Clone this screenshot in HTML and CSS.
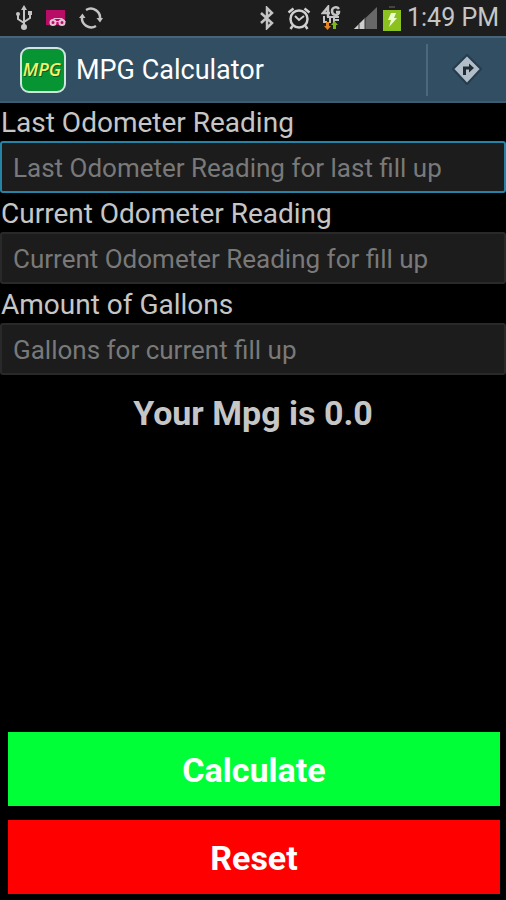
FILE: index.html
```html
<!DOCTYPE html>
<html lang="en">
<head>
<meta charset="utf-8">
<meta name="viewport" content="width=device-width, initial-scale=1">
<title>MPG Calculator</title>
<link rel="stylesheet" href="styles.css">
</head>
<body>
<div class="status">
  <div class="status-left">
    <svg width="18" height="26" viewBox="0 0 18 26" fill="none" stroke="#c4c4c4" stroke-width="2" aria-hidden="true">
      <path d="M9 22V4M9 18L3 14V9M9 17l6-4V8"/>
      <path d="M9 0l3 5H6z" fill="#c4c4c4" stroke="none"/>
      <circle cx="9" cy="22" r="3" fill="#c4c4c4" stroke="none"/>
      <circle cx="3" cy="9" r="2" fill="#c4c4c4" stroke="none"/>
      <path d="M13 6h4v4h-4z" fill="#c4c4c4" stroke="none"/>
    </svg>
    <svg width="20" height="18" viewBox="0 0 20 18" aria-hidden="true">
      <path d="M0 1h19v15H0z" fill="#b80d67"/>
      <path d="M4 13l4-4h8l4 4z" fill="#e7bfd2"/>
      <path d="M8 10h7l1 2H7z" fill="#b80d67"/>
      <circle cx="7" cy="13.500" r="2.500" fill="#b80d67" stroke="#e7bfd2" stroke-width="2"/>
      <circle cx="16" cy="13.500" r="2.500" fill="#b80d67" stroke="#e7bfd2" stroke-width="2"/>
    </svg>
    <svg width="24" height="24" viewBox="0 0 24 24" fill="none" stroke="#c4c4c4" stroke-width="2.500" aria-hidden="true">
      <path d="M7 4A9.300 9.300 0 0 1 21 13M17 20A9.300 9.300 0 0 1 3 11"/>
      <path d="M17.500 12h6.500l-3 4.500zM0 12h6.500l-3-4.500z" fill="#c4c4c4" stroke="none"/>
    </svg>
  </div>
  <div class="status-right">
    <svg class="bluetooth" width="16" height="24" viewBox="0 0 16 24" fill="none" stroke="#c4c4c4" stroke-width="2.500" aria-hidden="true"><path d="M2 7l11 10-5 5V2l5 5L2 17"/></svg>
    <svg class="alarm" width="24" height="24" viewBox="0 0 24 24" fill="none" stroke="#d0d0d0" stroke-width="2.500" aria-hidden="true"><circle cx="12" cy="13" r="8.500"/><path d="M1.500 6.500l5-4M22.500 6.500l-5-4M5.500 20l-2 3M18.500 20l2 3"/><path d="M8 10l4 4 5-4" stroke-width="2"/></svg>
    <svg class="network" width="20" height="26" viewBox="0 0 20 26" aria-hidden="true"><g fill="none" stroke="#c4c4c4" stroke-width="2.500"><path d="M7 12V2L2 8h7M18 4c-2-3-7-2-7 2 0 5 7 5 7 1h-3"/><path d="M3 11v6h3M6 12h6M9 12v6M18 12h-5v6M13 15h5" stroke-width="2"/></g><path d="M5 17h3v4h2l-3.500 4L3 21h2z" fill="#e28424"/><path d="M12 24v-4h-2l3.500-4 3.500 4h-2v4z" fill="#79b71a"/></svg>
    <svg class="signal" width="24" height="24" viewBox="0 0 24 24" aria-hidden="true"><path d="M24 1v22H1z" fill="#686868"/><path d="M12 12v11H1z" fill="#cfcfcf"/><path d="M6 18v5M12 11v12" stroke="#333" stroke-width="1"/></svg>
    <svg class="battery" width="18" height="26" viewBox="0 0 18 26" aria-hidden="true"><path d="M6 1h6v2H6z" fill="#444"/><path d="M0 5h18v21H0z" fill="#8bc220"/><path d="M8 8h5l-2 5h3l-8 9 2-7H5z" fill="#efffd2"/></svg>
    <time>1:49 PM</time>
  </div>
</div>
<header class="bar">
  <svg width="46" height="46" viewBox="0 0 46 46" aria-hidden="true"><rect x="1" y="1" width="44" height="44" rx="8" fill="#079534" stroke="#cfe6df" stroke-width="2"/><text x="23" y="30" class="logo-shade">MPG</text><text x="22" y="29" class="logo-text">MPG</text></svg>
  <h1>MPG Calculator</h1>
  <button class="directions" type="button" aria-label="Directions">
    <svg width="30" height="32" viewBox="0 0 30 32" aria-hidden="true"><path d="M15 1l14 14-14 15L1 15z" fill="#b1bdc8" stroke="#253c4c" stroke-width="2" stroke-linejoin="round"/><path d="M12.500 21v-7H18" fill="none" stroke="#202c35" stroke-width="3"/><path d="M17 9.500l5 4.500-5 4.500z" fill="#202c35"/></svg>
  </button>
</header>
<main>
  <form class="form">
    <label for="last">Last Odometer Reading</label>
    <input class="active" id="last" type="text" inputmode="decimal" placeholder="Last Odometer Reading for last fill up">
    <label for="current">Current Odometer Reading</label>
    <input id="current" type="text" inputmode="decimal" placeholder="Current Odometer Reading for fill up">
    <label for="gallons">Amount of Gallons</label>
    <input id="gallons" type="text" inputmode="decimal" placeholder="Gallons for current fill up">
    <output class="result" for="last current gallons">Your Mpg is 0.0</output>
    <div class="actions">
      <button class="calculate" type="button">Calculate</button>
      <button class="reset" type="reset">Reset</button>
    </div>
  </form>
</main>
</body>
</html>
```
FILE: styles.css
```css
* { box-sizing: border-box; }

body {
  display: flex;
  flex-direction: column;
  min-height: 100vh;
  margin: 0;
  background: #000;
  color: #c6c6c6;
  font-family: Roboto, sans-serif;
}

svg { display: block; flex: none; }

.status {
  display: flex;
  justify-content: space-between;
  align-items: center;
  height: 36px;
  padding: 0 7px 0 15px;
  background: #1d1d1d;
}

.status-left { display: flex; align-items: center; gap: 13px; }
.status-right { display: flex; align-items: center; gap: 6px; }
.alarm { margin-left: 6px; }
.network { margin: 0 6px 0 4px; }
time { font-size: 25px; line-height: 36px; white-space: nowrap; }

.bar {
  display: flex;
  align-items: center;
  gap: 10px;
  height: 67px;
  padding-left: 20px;
  background: #324e63;
  border-top: 2px solid #48647a;
  border-bottom: 2px solid #3c5c72;
}

.logo-text, .logo-shade {
  font-family: "Open Sans", sans-serif;
  font-size: 18px;
  font-style: italic;
  font-weight: 600;
  text-anchor: middle;
}
.logo-text { fill: #f3f36a; }
.logo-shade { fill: #075c20; }

h1 {
  flex: 1;
  margin: 0;
  color: #fff;
  font-size: 27px;
  font-weight: 400;
  line-height: 36px;
}

button {
  border: 0;
  padding: 0;
  font-family: inherit;
}

.directions {
  display: flex;
  align-items: center;
  justify-content: center;
  width: 80px;
  height: 52px;
  background: transparent;
  border-left: 2px solid #4d687b;
}

main, .form {
  display: flex;
  flex: 1;
  flex-direction: column;
}

label {
  padding: 3px 0 0 1px;
  font-size: 28px;
  line-height: 36px;
}
.form label:first-child { padding-top: 2px; }

input {
  width: 100%;
  height: 52px;
  padding: 2px 11px 0;
  background: #1c1c1c;
  border: 2px solid #292929;
  border-radius: 3px;
  outline: 0;
  color: #c6c6c6;
  font-family: inherit;
  font-size: 26px;
}
input.active, input:focus { border-color: #2583a6; }
input::placeholder { color: #797979; opacity: 1; }

.result {
  padding-top: 18px;
  font-size: 34px;
  font-weight: 700;
  line-height: 40px;
  text-align: center;
}

.actions {
  display: grid;
  gap: 14px;
  margin-top: auto;
  padding: 6px 6px 6px 8px;
}

.actions button {
  height: 74px;
  padding-top: 2px;
  color: #fff;
  font-size: 34px;
  font-weight: 700;
}
.calculate { background: #00ff37; }
.reset { background: #f00; }
```
